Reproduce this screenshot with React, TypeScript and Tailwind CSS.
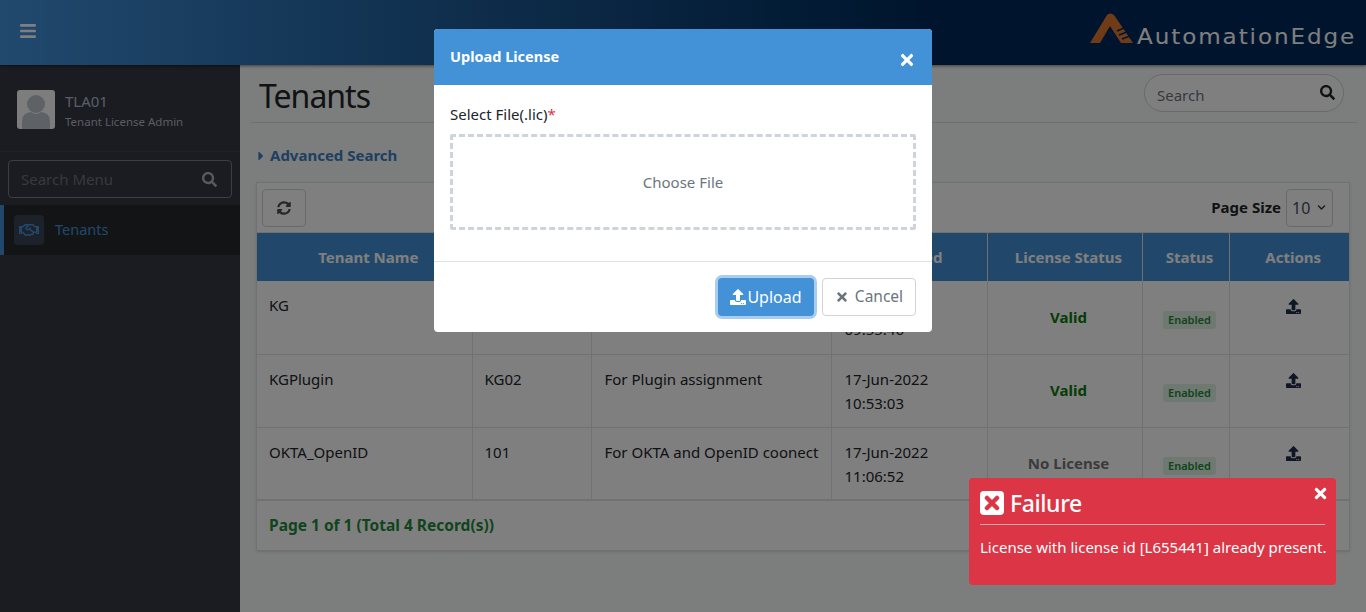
import { FaBars, FaSearch, FaSyncAlt, FaRegHandshake, FaUpload, FaTimes, FaCaretRight, FaChevronDown } from 'react-icons/fa';

const font = { fontFamily: '"Noto Sans", "Open Sans", sans-serif' };

const rows = [
  { name: 'KG', code: 'KG01', desc: 'For KG', date: '17-Jun-2022', time: '09:55:46', license: 'Valid' },
  { name: 'KGPlugin', code: 'KG02', desc: 'For Plugin assignment', date: '17-Jun-2022', time: '10:53:03', license: 'Valid' },
  { name: 'OKTA_OpenID', code: '101', desc: 'For OKTA and OpenID coonect', date: '17-Jun-2022', time: '11:06:52', license: 'No License' },
];

function Logo() {
  return (
    <div className="flex items-end gap-[3px] mb-[9px]">
      <svg width="44" height="31" viewBox="0 0 44 31">
        <path d="M0 30 L17 2 Q20 -1 24 2 L43 30 L31 30 L20 13 L10 30 Z" fill="#e0772f" />
        <path d="M27 18 L34 15 M29 22 L37 19 M32 26 L40 23" stroke="#002a5a" strokeWidth="1.5" />
      </svg>
      <span className="text-[#fff] text-[22px] leading-[24px] tracking-[1.8px] origin-left scale-x-[1.05] translate-y-[5px] w-[229px] whitespace-nowrap" style={{ fontFamily: '"DejaVu Sans", sans-serif' }}>
        AutomationEdge
      </span>
    </div>
  );
}

function Sidebar() {
  return (
    <aside className="w-[240px] shrink-0 bg-[#343844] flex flex-col">
      <div className="h-[87px] flex items-center gap-[10px] pl-[17px] border-b border-[#3f434f] pt-[3px]">
        <div className="w-[38px] h-[39px] rounded-[3px] bg-[#fafafa] overflow-hidden">
          <svg width="38" height="39" viewBox="0 0 38 39">
            <circle cx="19" cy="14" r="9" fill="#bcc4ce" />
            <path d="M5 39 V31 Q5 23 14 22 Q19 26 24 22 Q33 23 33 31 V39 Z" fill="#bcc4ce" />
          </svg>
        </div>
        <div className="pt-[2px]">
          <div className="text-[15px] leading-[20px] text-[#b3bcd0]">TLA01</div>
          <div className="text-[11.5px] leading-[16px] mt-[3px] text-[#b3b8c4]">Tenant License Admin</div>
        </div>
      </div>
      <div className="mx-[8px] mt-[8px] h-[38px] rounded-[4px] border border-[#7a7d85] flex items-center justify-between pl-[12px] pr-[14px]">
        <span className="text-[15px] text-[#6f727a] pt-[1px]">Search Menu</span>
        <FaSearch className="text-[15px] text-[#b5b5b5]" />
      </div>
      <div className="mt-[7px] h-[50px] bg-[#27292d] border-l-[4px] border-[#4391d7] flex items-center pl-[10px] gap-[11px]">
        <div className="w-[30px] h-[30px] rounded-[4px] bg-[#3b4252] flex items-center justify-center">
          <FaRegHandshake className="text-[20px] text-[#4391d7]" />
        </div>
        <span className="text-[14.5px] text-[#4391d7]">Tenants</span>
      </div>
    </aside>
  );
}

function Th({ children, last }: { children: React.ReactNode; last?: boolean }) {
  return (
    <th className={`font-bold text-[15px] text-[#fff] text-center pl-[8px] border-[#dee2e6] ${last ? '' : 'border-r'}`}>{children}</th>
  );
}

function Main() {
  return (
    <main className="flex-1 bg-[#f8fafa] pl-[11px] pr-[9px] min-w-0">
      <div className="h-[58px] border-b border-[#dcdfe2] flex items-center justify-between pl-[8px] pr-[13px]">
        <h1 className="text-[32px] leading-[40px] tracking-[-1px] text-[#212529] mt-[5px]">Tenants</h1>
        <div className="w-[200px] h-[38px] rounded-full border border-[#ced4da] bg-[#fff] flex items-center justify-between pl-[12px] pr-[8px] mt-[-1px]">
          <span className="text-[15px] text-[#6c757d] pt-[4px]">Search</span>
          <FaSearch className="text-[15px] text-[#212529] mb-[2px]" />
        </div>
      </div>
      <div className="h-[59px] flex items-center pl-[7px] pt-[6px] gap-[6px] text-[#3f7fc4] font-bold text-[15px]">
        <FaCaretRight className="text-[14px] w-[6px]" />
        <span>Advanced Search</span>
      </div>
      <div className="ml-[5px] w-[1094px] border border-[#dee2e6] bg-[#fff] shadow-sm">
        <div className="h-[50px] flex items-center justify-between pl-[5px] pr-[16px] border-b border-[#dee2e6]">
          <div className="w-[44px] h-[38px] rounded-[4px] border border-[#ced4da] flex items-center justify-center">
            <FaSyncAlt className="text-[14px] text-[#4a4f55]" />
          </div>
          <div className="flex items-center gap-[5px]">
            <span className="font-bold text-[15px] text-[#212529]">Page Size</span>
            <div className="w-[47px] h-[38px] rounded-[4px] border border-[#ced4da] flex items-center justify-between pl-[5px] pr-[6px]">
              <span className="text-[16px] text-[#495057]">10</span>
              <FaChevronDown className="text-[9px] text-[#343a40]" />
            </div>
          </div>
        </div>
        <table className="w-full table-fixed border-collapse text-[15px] text-[#212529]">
          <colgroup>
            <col className="w-[215px]" />
            <col className="w-[119px]" />
            <col className="w-[240px]" />
            <col className="w-[156px]" />
            <col className="w-[155px]" />
            <col className="w-[87px]" />
            <col />
          </colgroup>
          <thead>
            <tr className="h-[48px] bg-[#4391d7]">
              <Th>Tenant Name</Th>
              <Th>Tenant Code</Th>
              <Th>Description</Th>
              <Th>Created</Th>
              <Th>License Status</Th>
              <Th>Status</Th>
              <Th last>Actions</Th>
            </tr>
          </thead>
          <tbody>
            {rows.map((r) => (
              <tr key={r.name} className="h-[73px] border-b border-[#dee2e6] last:border-b-2">
                <td className="align-top pl-[12px] pt-[13px] border-r border-[#dee2e6]">{r.name}</td>
                <td className="align-top pl-[12px] pt-[13px] border-r border-[#dee2e6]">{r.code}</td>
                <td className="align-top pl-[13px] pt-[13px] border-r border-[#dee2e6] whitespace-nowrap">{r.desc}</td>
                <td className="align-top pl-[13px] pt-[12px] leading-[24px] border-r border-[#dee2e6]">
                  {r.date}
                  <br />
                  {r.time}
                </td>
                <td className={`text-center font-bold pl-[8px] border-r border-[#dee2e6] ${r.license === 'Valid' ? 'text-[#0a7a0a]' : 'text-[#777]'}`}>
                  {r.license}
                </td>
                <td className="text-center pl-[8px] border-r border-[#dee2e6] pt-[1px]">
                  <span className="inline-block rounded-[3px] bg-[#dff0e2] text-[#1f8a3a] font-semibold text-[11px] leading-[18px] px-[5px]">Enabled</span>
                </td>
                <td className="align-top pl-[8px] pt-[18px]">
                  <FaUpload className="text-[15px] mx-auto text-[#212d4a]" />
                </td>
              </tr>
            ))}
          </tbody>
        </table>
        <div className="h-[49px] flex items-center pl-[12px] pt-[1px] font-bold text-[15.5px] text-[#1f8a3a]">Page 1 of 1 (Total 4 Record(s))</div>
      </div>
    </main>
  );
}

function UploadModal() {
  return (
    <div className="absolute left-[434px] top-[29px] w-[498px] h-[303px] rounded-[4px] bg-[#fff] overflow-hidden flex flex-col">
      <div className="h-[56px] bg-[#4391d7] flex items-center justify-between pl-[16px] pr-[16px] text-[#fff]">
        <span className="font-bold text-[14.5px] mb-[1px]">Upload License</span>
        <FaTimes className="text-[18px] mt-[6px]" />
      </div>
      <div className="h-[177px] border-b border-[#dee2e6] px-[16px] pt-[18px]">
        <div className="text-[15px] leading-[22px] text-[#212529]">
          Select File(.lic)<span className="text-[#dc3545]">*</span>
        </div>
        <div className="mt-[9px] h-[96px] rounded-[3px] border-[3px] border-dashed border-[#ced4da] flex items-center justify-center text-[15px] text-[#6c757d]">
          Choose File
        </div>
      </div>
      <div className="flex-1 flex justify-end gap-[8px] pr-[16px] pt-[16px]">
        <div className="w-[96px] h-[38px] rounded-[4px] bg-[#4391d7] ring-[3px] ring-[#a9cdee] flex items-center justify-center text-[#fff] text-[16px] gap-[1px]">
          <FaUpload className="text-[16px]" />
          Upload
        </div>
        <div className="w-[94px] h-[38px] rounded-[4px] border border-[#ced4da] flex items-center justify-center gap-[6px] text-[#6c757d] text-[15.5px]">
          <FaTimes className="text-[14px]" />
          Cancel
        </div>
      </div>
    </div>
  );
}

function FailureToast() {
  return (
    <div className="absolute left-[969px] top-[478px] w-[367px] h-[107px] rounded-[4px] bg-[#dc3545] text-[#fff] px-[11px] pt-[9px]">
      <div className="h-[38px] flex items-center gap-[6px] border-b border-[#eda3aa] pb-[5px]">
        <svg width="24" height="24" viewBox="0 0 24 24">
          <rect width="24" height="24" rx="4" fill="#fff" />
          <path d="M7 7 L17 17 M17 7 L7 17" stroke="#dc3545" strokeWidth="4.5" strokeLinecap="round" />
        </svg>
        <span className="text-[23px] leading-[30px] font-medium tracking-[-0.4px]">Failure</span>
      </div>
      <FaTimes className="absolute right-[7px] top-[7px] text-[17px]" />
      <div className="text-[15px] leading-[20px] mt-[12px] whitespace-nowrap">License with license id [L655441] already present.</div>
    </div>
  );
}

export default function App() {
  return (
    <div className="relative w-[1366px] h-[612px] overflow-hidden" style={font}>
      <header className="relative h-[65px] flex items-center justify-between bg-gradient-to-r from-[#4293dc] to-[#002a5a] to-[68%] shadow-[0_1px_3px_rgba(0,0,0,0.5)] pl-[19px]">
        <FaBars className="text-[18px] text-[#fff] mt-[-4px]" />
        <Logo />
      </header>
      <div className="flex h-[547px]">
        <Sidebar />
        <Main />
      </div>
      <div className="absolute inset-0 bg-[#000]/50" />
      <UploadModal />
      <FailureToast />
    </div>
  );
}
